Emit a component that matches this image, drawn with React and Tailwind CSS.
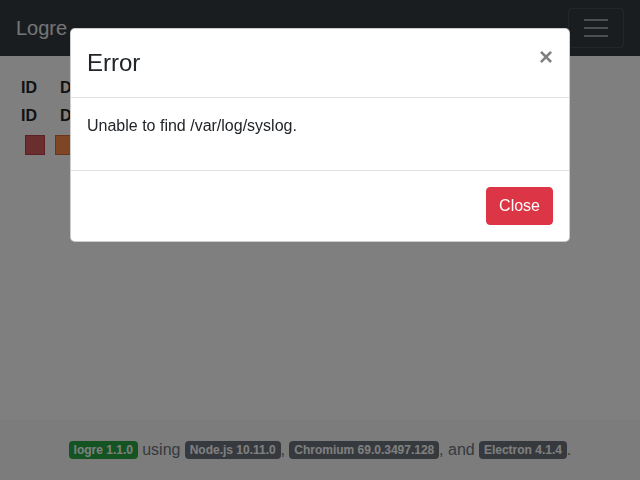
export default function App() {
  const badge = "rounded px-[4.8px] py-[3px] text-[12px] font-bold leading-none text-white";
  return (
    <div className="relative flex min-h-[480px] flex-col bg-white text-[#212529]" style={{ fontFamily: '"Liberation Sans", Arial, sans-serif' }}>
      <nav className="flex h-14 items-center justify-between bg-[#343a40] px-4">
        <span className="text-[20px] leading-[30px] text-white/90">Logre</span>
        <button className="flex h-10 w-14 flex-col items-center justify-center gap-[6px] rounded border border-white/10">
          <span className="block h-[2px] w-6 bg-white/50"></span>
          <span className="block h-[2px] w-6 bg-white/50"></span>
          <span className="block h-[2px] w-6 bg-white/50"></span>
        </button>
      </nav>
      <main className="flex grow flex-col px-[21px] pt-[18px]">
        <div className="flex gap-[23px] text-base font-bold leading-[28px]">
          <span>ID</span>
          <span>Date</span>
        </div>
        <div className="flex gap-[23px] text-base font-bold leading-[28px]">
          <span>ID</span>
          <span>Date</span>
        </div>
        <div className="mt-[5px] flex gap-[10px] pl-1">
          <div className="h-5 w-5 border border-[#b44046] bg-[#d65c5e]"></div>
          <div className="h-5 w-5 border border-[#d86a30] bg-[#ff8c4c]"></div>
        </div>
      </main>
      <footer className="flex h-[60px] items-center justify-center whitespace-pre bg-[#f8f9fa] text-base text-[#6c757d]">
        <span className={`${badge} bg-[#28a745]`}>logre 1.1.0</span>
        <span> using </span>
        <span className={`${badge} bg-[#6c757d]`}>Node.js 10.11.0</span>
        <span>, </span>
        <span className={`${badge} bg-[#6c757d]`}>Chromium 69.0.3497.128</span>
        <span>, and </span>
        <span className={`${badge} bg-[#6c757d]`}>Electron 4.1.4</span>
        <span>.</span>
      </footer>

      <div className="fixed inset-0 bg-black/50"></div>

      <div className="fixed left-[70px] top-[28px] w-[500px] rounded-[5px] border border-black/20 bg-white">
        <div className="flex items-start justify-between border-b border-[#dee2e6] p-4">
          <h5 className="text-[24px] font-medium leading-[36px]">Error</h5>
          <button className="-m-4 p-4 text-[24px] font-bold leading-none text-black/50">×</button>
        </div>
        <div className="p-4">
          <p className="mb-4 text-base leading-6">Unable to find /var/log/syslog.</p>
        </div>
        <div className="flex justify-end border-t border-[#dee2e6] p-4">
          <button className="rounded border border-[#dc3545] bg-[#dc3545] px-3 py-[6px] text-base leading-6 text-white">Close</button>
        </div>
      </div>
    </div>
  );
}
